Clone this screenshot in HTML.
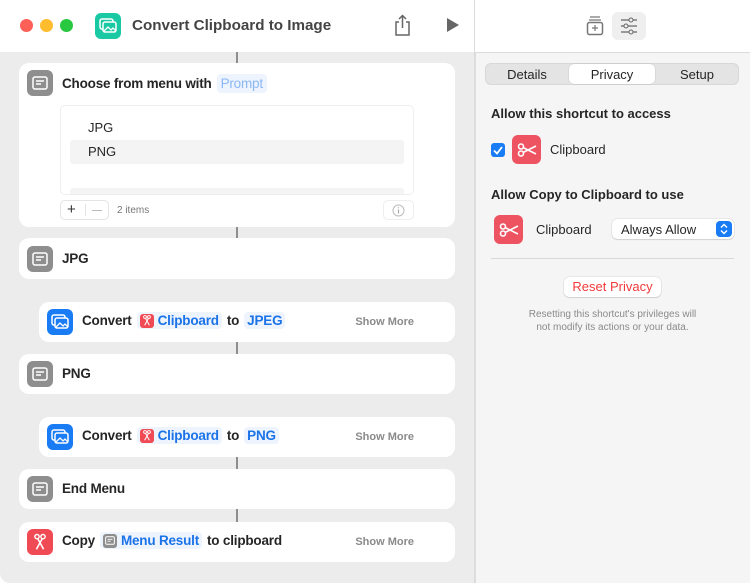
<!DOCTYPE html>
<html><head><meta charset="utf-8"><style>
*{box-sizing:border-box;margin:0;padding:0}
body{width:750px;height:583px;overflow:hidden;font-family:"Liberation Sans",sans-serif;background:#fff;position:relative;color:#262626}
.left{position:absolute;left:0;top:52px;width:474px;height:531px;background:#ececec;border-bottom-left-radius:10px}
.right{position:absolute;left:475px;top:52px;width:275px;height:531px;background:#f5f5f5;border-left:1px solid #ddd}
.divtop{position:absolute;left:474px;top:0;width:1px;height:583px;background:#dcdcdc}
.hline{position:absolute;left:475px;top:52px;width:275px;height:1px;background:#dcdcdc}
.card{position:absolute;background:#fff;border-radius:10px;left:19px;width:436px}
.ico{position:absolute;left:8px;width:26px;height:26px;border-radius:6px;display:flex;align-items:center;justify-content:center}
.gray{background:#8e8e8e}.blue{background:#1a7cf5}.red{background:#f04b55}
.t{position:absolute;font-size:13.5px;letter-spacing:-0.2px;font-weight:bold;color:#262626;white-space:nowrap;display:flex;align-items:center}
.tok{background:#eef4fd;color:#1a73e8;border-radius:4px;padding:1px 3px;margin:0 5px;display:inline-flex;align-items:center}
.mini{width:14px;height:14px;border-radius:3px;background:#f04b55;display:inline-flex;align-items:center;justify-content:center;margin-right:4px}
.sm{position:absolute;right:41px;font-size:11px;color:#8a8a8a;font-weight:bold}
.conn{position:absolute;left:236px;width:2px;background:#8e8e8e}
</style></head><body>
<div class="left"></div>
<div class="right"></div>
<div class="divtop"></div>
<div class="hline"></div>
<div style="position:absolute;left:20px;top:19px;width:13px;height:13px;border-radius:50%;background:#fe5f57"></div>
<div style="position:absolute;left:40px;top:19px;width:13px;height:13px;border-radius:50%;background:#febc2e"></div>
<div style="position:absolute;left:60px;top:19px;width:13px;height:13px;border-radius:50%;background:#28c840"></div>
<div style="position:absolute;left:95px;top:13px;width:26px;height:26px;border-radius:6px;background:#19c9a4;display:flex;align-items:center;justify-content:center">
<svg width="18" height="16" viewBox="0 0 18 16"><rect x="1" y="1" width="13" height="10" rx="2" fill="none" stroke="#fff" stroke-width="1.5"/><rect x="4" y="4" width="13" height="10" rx="2" fill="#19c9a4" stroke="#fff" stroke-width="1.5"/><path d="M5 13l4-4 3 3 2-2 3 3" fill="none" stroke="#fff" stroke-width="1.3"/></svg></div>
<div style="position:absolute;left:132px;top:17px;font-size:15.2px;font-weight:bold;color:#444">Convert Clipboard to Image</div>
<svg style="position:absolute;left:394px;top:14px" width="17" height="22" viewBox="0 0 17 22"><path d="M5 8H2v13h13V8h-3M8.5 14V2M5 5l3.5-3.5L12 5" fill="none" stroke="#666" stroke-width="1.5"/></svg>
<svg style="position:absolute;left:446px;top:17px" width="14" height="16" viewBox="0 0 14 16"><path d="M1 1l12 7-12 7z" fill="#666"/></svg>
<svg style="position:absolute;left:586px;top:15px" width="18" height="21" viewBox="0 0 18 21"><path d="M4 2h10M3 5h12" stroke="#777" stroke-width="1.2"/><rect x="1.5" y="7.5" width="15" height="12" rx="2" fill="none" stroke="#777" stroke-width="1.5"/><path d="M9 10v6M6 13h6" stroke="#777" stroke-width="1.2"/></svg>
<div style="position:absolute;left:612px;top:12px;width:34px;height:28px;border-radius:6px;background:#efefef"></div>
<svg style="position:absolute;left:620px;top:17px" width="18" height="18" viewBox="0 0 18 18"><path d="M1 3h16M1 9h16M1 15h16" stroke="#666" stroke-width="1.2"/><circle cx="11" cy="3" r="2" fill="#efefef" stroke="#666"/><circle cx="6" cy="9" r="2" fill="#efefef" stroke="#666"/><circle cx="11" cy="15" r="2" fill="#efefef" stroke="#666"/></svg>
<div style="position:absolute;left:485px;top:63px;width:254px;height:22px;border-radius:6px;background:#e4e4e4;border:1px solid #d8d8d8"></div>
<div style="position:absolute;left:569px;top:64px;width:86px;height:20px;border-radius:5px;background:#fff;box-shadow:0 0 1px rgba(0,0,0,.3)"></div>
<div style="position:absolute;left:485px;top:67px;width:84px;text-align:center;font-size:13px">Details</div>
<div style="position:absolute;left:569px;top:67px;width:86px;text-align:center;font-size:13px">Privacy</div>
<div style="position:absolute;left:655px;top:67px;width:84px;text-align:center;font-size:13px">Setup</div>
<div style="position:absolute;left:491px;top:106px;font-size:13px;font-weight:bold">Allow this shortcut to access</div>
<div style="position:absolute;left:491px;top:143px;width:14px;height:14px;border-radius:3px;background:#1a7cf5;display:flex;align-items:center;justify-content:center"><svg width="10" height="9" viewBox="0 0 10 9"><path d="M1 4.5l3 3L9 1" fill="none" stroke="#fff" stroke-width="1.8"/></svg></div>
<div style="position:absolute;left:512px;top:135px;width:29px;height:29px;border-radius:6px;background:#ed5360;display:flex;align-items:center;justify-content:center"><svg width="20" height="14" viewBox="0 0 20 14"><circle cx="4" cy="3.5" r="2.5" fill="none" stroke="#fff" stroke-width="1.6"/><circle cx="4" cy="10.5" r="2.5" fill="none" stroke="#fff" stroke-width="1.6"/><path d="M6 4.5L19 11M6 9.5L19 3" stroke="#fff" stroke-width="1.6"/></svg></div>
<div style="position:absolute;left:550px;top:142px;font-size:13px">Clipboard</div>
<div style="position:absolute;left:491px;top:187px;font-size:13px;font-weight:bold">Allow Copy to Clipboard to use</div>
<div style="position:absolute;left:494px;top:215px;width:29px;height:29px;border-radius:6px;background:#ed5360;display:flex;align-items:center;justify-content:center"><svg width="20" height="14" viewBox="0 0 20 14"><circle cx="4" cy="3.5" r="2.5" fill="none" stroke="#fff" stroke-width="1.6"/><circle cx="4" cy="10.5" r="2.5" fill="none" stroke="#fff" stroke-width="1.6"/><path d="M6 4.5L19 11M6 9.5L19 3" stroke="#fff" stroke-width="1.6"/></svg></div>
<div style="position:absolute;left:536px;top:222px;font-size:13px">Clipboard</div>
<div style="position:absolute;left:612px;top:219px;width:122px;height:20px;border-radius:5px;background:#fff;box-shadow:0 0 1px rgba(0,0,0,.35),0 1px 1px rgba(0,0,0,.1)"></div>
<div style="position:absolute;left:621px;top:222px;font-size:13px">Always Allow</div>
<div style="position:absolute;left:716px;top:221px;width:16px;height:16px;border-radius:4px;background:#1a7cf5;display:flex;align-items:center;justify-content:center"><svg width="8" height="12" viewBox="0 0 8 12"><path d="M1 4.5L4 1.5L7 4.5M1 7.5L4 10.5L7 7.5" fill="none" stroke="#fff" stroke-width="1.4"/></svg></div>
<div style="position:absolute;left:491px;top:258px;width:243px;height:1px;background:#d8d8d8"></div>
<div style="position:absolute;left:564px;top:277px;width:97px;height:20px;border-radius:5px;background:#fff;box-shadow:0 0 1px rgba(0,0,0,.35),0 1px 1px rgba(0,0,0,.1);text-align:center;font-size:13px;color:#f23a3a;line-height:20px">Reset Privacy</div>
<div style="position:absolute;left:491px;top:308px;width:243px;text-align:center;font-size:10px;color:#8a8a8a;line-height:13px">Resetting this shortcut's privileges will<br>not modify its actions or your data.</div>

<div class="conn" style="top:52px;height:11px"></div>
<div class="conn" style="top:227px;height:11px"></div>
<div class="conn" style="top:342px;height:12px"></div>
<div class="conn" style="top:457px;height:12px"></div>
<div class="conn" style="top:509px;height:13px"></div>

<svg width="0" height="0" style="position:absolute"><defs>
<symbol id="menu" viewBox="0 0 16 14"><rect x="1" y="1" width="14" height="12" rx="2" fill="none" stroke="#fff" stroke-width="1.5"/><path d="M4 5h8M4 8h5" stroke="#fff" stroke-width="1.4"/></symbol>
<symbol id="img" viewBox="0 0 18 16"><rect x="1" y="1" width="13" height="10" rx="2" fill="none" stroke="#fff" stroke-width="1.5"/><rect x="4" y="4" width="13" height="10" rx="2" fill="#1a7cf5" stroke="#fff" stroke-width="1.5"/><path d="M5 13l4-4 3 3 2-2 3 3" fill="none" stroke="#fff" stroke-width="1.3"/></symbol>
<symbol id="sc" viewBox="0 0 10 14"><circle cx="2.5" cy="2.5" r="1.8" fill="none" stroke="#fff" stroke-width="1.2"/><circle cx="7.5" cy="2.5" r="1.8" fill="none" stroke="#fff" stroke-width="1.2"/><path d="M3 4l5 9M7 4l-5 9" stroke="#fff" stroke-width="1.3"/></symbol>
</defs></svg>

<div class="card" style="top:63px;height:164px">
<div class="ico gray" style="top:7px"><svg width="16" height="14"><use href="#menu"/></svg></div>
<div class="t" style="left:43px;top:11px">Choose from menu with <span class="tok" style="color:#8bb7f5;font-weight:normal;padding:2px 4px">Prompt</span></div>
<div style="position:absolute;left:41px;top:42px;width:354px;height:90px;border:1px solid #eee;border-radius:5px;overflow:hidden">
<div style="position:absolute;left:27px;top:14px;font-size:13px">JPG</div>
<div style="position:absolute;left:9px;top:34px;width:334px;height:24px;background:#f4f4f4;border-radius:3px"></div>
<div style="position:absolute;left:27px;top:38px;font-size:13px">PNG</div>
<div style="position:absolute;left:9px;top:82px;width:334px;height:10px;background:#f4f4f4;border-radius:3px"></div>
</div>
<div style="position:absolute;left:41px;top:137px;width:49px;height:20px;border:1px solid #e4e4e4;border-radius:5px;font-size:15px;color:#333"><span style="position:absolute;left:6px;top:0px">+</span><span style="position:absolute;left:24px;top:3px;width:1px;height:12px;background:#e4e4e4"></span><span style="position:absolute;left:31px;top:9px;width:10px;height:1px;background:#bbb"></span></div>
<div style="position:absolute;left:98px;top:142px;font-size:10px;color:#777">2 items</div>
<div style="position:absolute;left:364px;top:137px;width:31px;height:20px;border:1px solid #eee;border-radius:5px;display:flex;align-items:center;justify-content:center"><svg width="13" height="13"><circle cx="6.5" cy="6.5" r="5.5" fill="none" stroke="#bbb"/><path d="M6.5 5.5v4M6.5 3.2v1" stroke="#aaa" stroke-width="1.2"/></svg></div>
</div>

<div class="card" style="top:238px;height:41px"><div class="ico gray" style="top:8px"><svg width="16" height="14"><use href="#menu"/></svg></div><div class="t" style="left:43px;top:13px">JPG</div></div>

<div class="card" style="left:39px;width:416px;top:302px;height:40px"><div class="ico blue" style="top:7px"><svg width="18" height="16"><use href="#img"/></svg></div><div class="t" style="left:43px;top:10px">Convert <span class="tok"><span class="mini"><svg width="8" height="11"><use href="#sc"/></svg></span>Clipboard</span>to <span class="tok">JPEG</span></div><div class="sm" style="top:14px">Show More</div></div>

<div class="card" style="top:354px;height:40px"><div class="ico gray" style="top:7px"><svg width="16" height="14"><use href="#menu"/></svg></div><div class="t" style="left:43px;top:12px">PNG</div></div>

<div class="card" style="left:39px;width:416px;top:417px;height:40px"><div class="ico blue" style="top:7px"><svg width="18" height="16"><use href="#img"/></svg></div><div class="t" style="left:43px;top:10px">Convert <span class="tok"><span class="mini"><svg width="8" height="11"><use href="#sc"/></svg></span>Clipboard</span>to <span class="tok">PNG</span></div><div class="sm" style="top:14px">Show More</div></div>

<div class="card" style="top:469px;height:40px"><div class="ico gray" style="top:7px"><svg width="16" height="14"><use href="#menu"/></svg></div><div class="t" style="left:43px;top:12px">End Menu</div></div>

<div class="card" style="top:522px;height:40px"><div class="ico red" style="top:7px"><svg width="12" height="18"><use href="#sc"/></svg></div><div class="t" style="left:43px;top:10px">Copy <span class="tok"><span class="mini" style="background:#8e8e8e"><svg width="10" height="9"><use href="#menu"/></svg></span>Menu Result</span>to clipboard</div><div class="sm" style="top:14px">Show More</div></div>
</body></html>
